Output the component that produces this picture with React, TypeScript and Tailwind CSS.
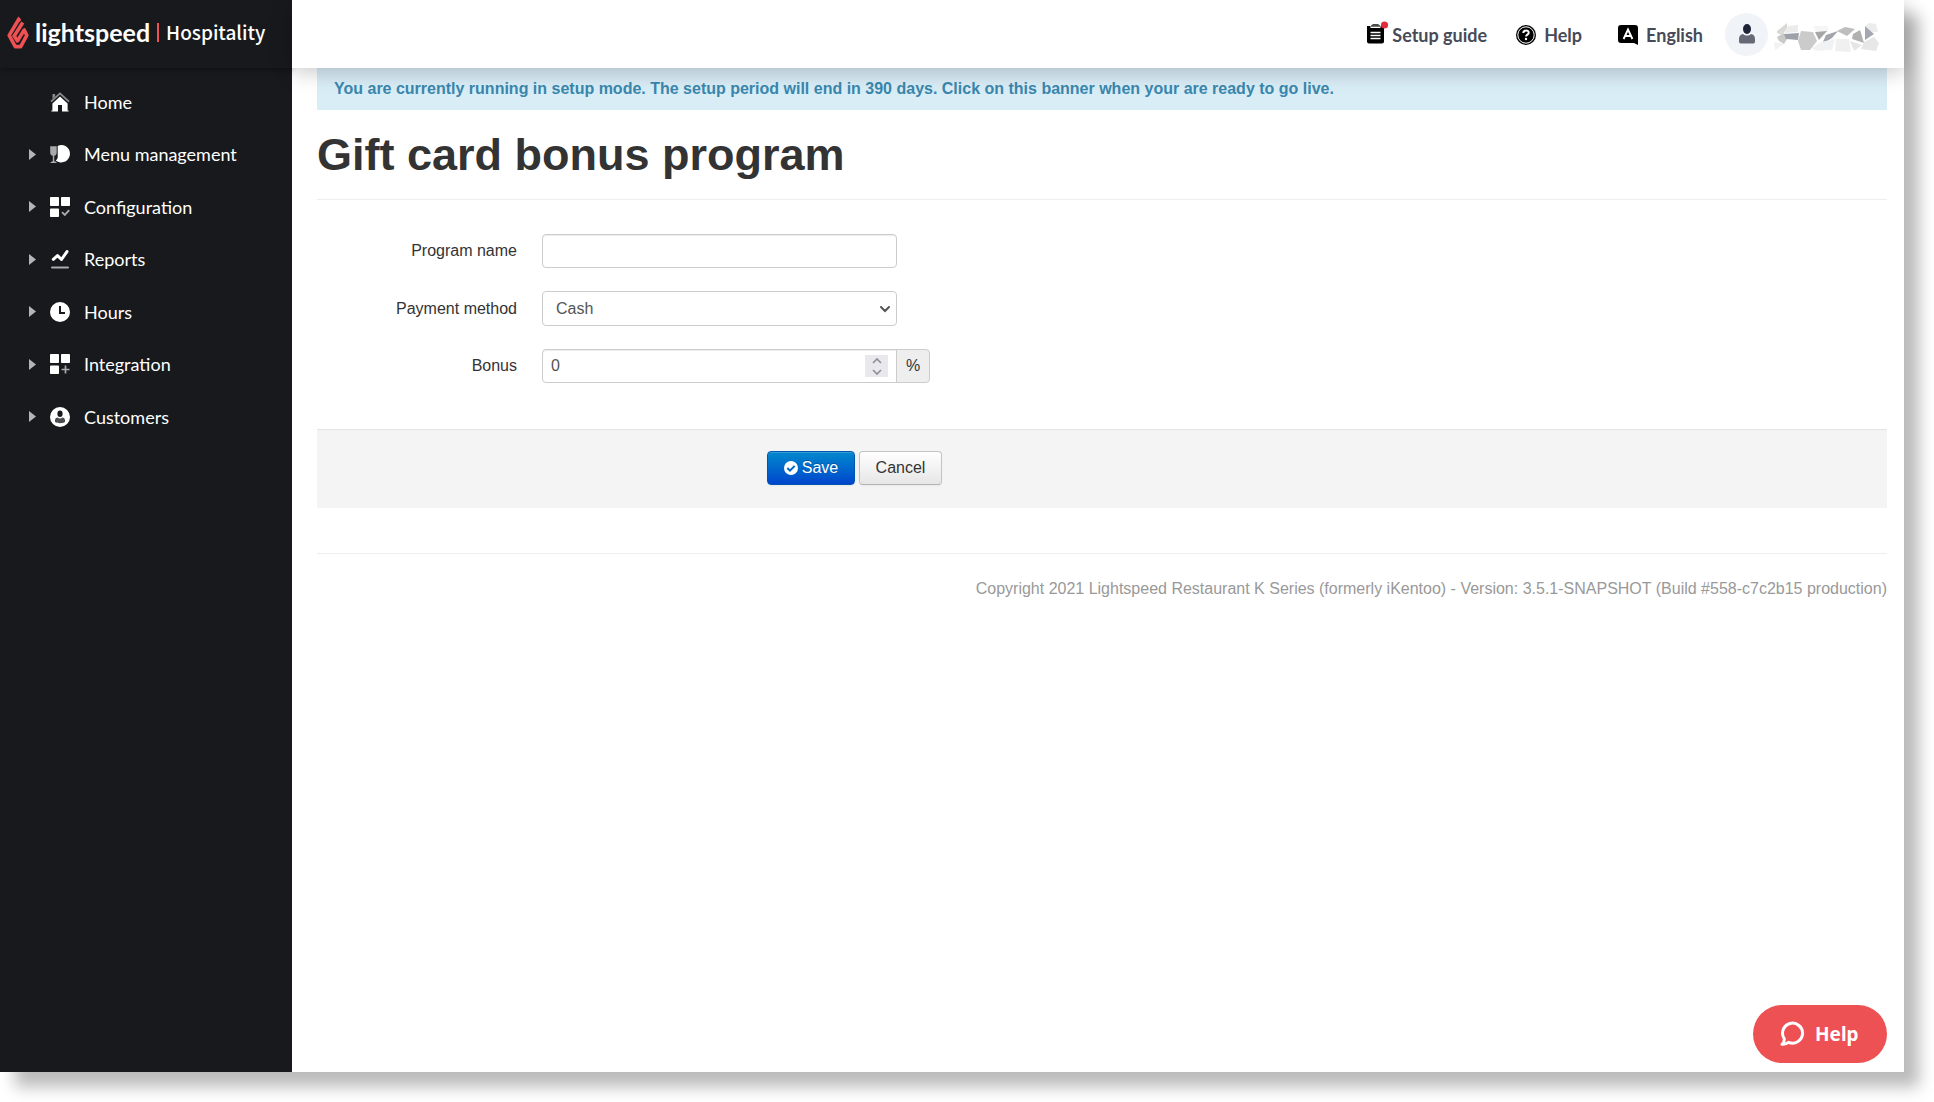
import { type ReactNode, useState } from "react"

function FlameLogo() {
  return (
    <svg viewBox="0 0 22 33" className="mr-[6px] h-[33px] w-[22px]" aria-hidden="true">
      <g fill="none" stroke="#ee5153" strokeWidth="3.6">
        <path d="M12.5 2 2.2 19.3 8.3 30.6h5.4l6.100-11.300-2.600-5.300L10 25.500" strokeLinejoin="round" />
        <path d="M15.8 6.5 7.2 20l4 6" />
      </g>
      <path d="M11.5 0 14 4.5l-2.500 2z" fill="#ee5153" />
    </svg>
  )
}

function HomeIcon() {
  return (
    <svg viewBox="0 0 20 20" className="size-5" aria-hidden="true">
      <path d="M2.5 2h2.6v2.6L2.5 7z" fill="#8b8c8e" />
      <path d="M1 9.6 10 1.4l9 8.2" fill="none" stroke="#8b8c8e" strokeWidth="1.8" />
      <path d="M10 4.6 17.6 11.6V18.4H18.6V19.6H12V13H8V19.6H1.4V18.4H2.4V11.6z" fill="#fff" />
    </svg>
  )
}

function MenuIcon() {
  return (
    <svg viewBox="0 0 20 20" className="size-5" aria-hidden="true">
      <path d="M11.5 1a8.7 8.7 0 1 1-5.8 15.4c2-1.2 2.2-3.2 2-5.4V1.9A8.7 8.7 0 0 1 11.5 1z" fill="#fff" />
      <path d="M.2 2.3h6.5v6.2c0 2-.9 3-2.4 3.3v5.4l2.2.9v1H.6v-1l2.2-.9v-5.4C1.200 11.500.2 10.500.2 8.500z" fill="#a9aaab" />
    </svg>
  )
}

function Tiles({ children }: { children: ReactNode }) {
  return (
    <svg viewBox="0 0 20 20" className="size-5" aria-hidden="true">
      <g fill="#fff">
        <rect width="9" height="9" rx=".8" />
        <rect x="11" width="9" height="9" rx=".8" />
        <rect y="11.5" width="9" height="8.5" rx=".8" />
      </g>
      {children}
    </svg>
  )
}

function ReportsIcon() {
  return (
    <svg viewBox="0 0 20 20" className="size-5" aria-hidden="true">
      <path d="M3.3 10.3 7.5 6.6l4 3.9L17 2.6" fill="none" stroke="#fff" strokeWidth="3" strokeLinecap="round" strokeLinejoin="round" />
      <rect x="1" y="17.4" width="18" height="2.2" rx="1" fill="#a9aaab" />
    </svg>
  )
}

function ClockIcon() {
  return (
    <svg viewBox="0 0 20 20" className="size-5" aria-hidden="true">
      <circle cx="10" cy="10" r="10" fill="#fff" />
      <path d="M10 4v7h5" fill="none" stroke="#18191c" strokeWidth="2" />
    </svg>
  )
}

function CustomerIcon() {
  return (
    <svg viewBox="0 0 20 20" className="size-5" aria-hidden="true">
      <circle cx="10" cy="10" r="10" fill="#fff" />
      <ellipse cx="10" cy="6.8" rx="2.6" ry="3.2" fill="#18191c" />
      <path d="M5 13.5c0-2 1-3 2.7-3 1.3 1.3 3.3 1.3 4.6 0 1.7 0 2.7 1 2.7 3v1.6c-2.5 1.6-7.5 1.6-10 0z" fill="#4c4d50" />
    </svg>
  )
}

const navItems = [
  { label: "Home", icon: <HomeIcon />, nested: false },
  { label: "Menu management", icon: <MenuIcon />, nested: true },
  {
    label: "Configuration",
    icon: (
      <Tiles>
        <path d="m12 15.2 2.8 2.8 4.4-4.8" fill="none" stroke="#a9aaab" strokeWidth="1.9" />
      </Tiles>
    ),
    nested: true,
  },
  { label: "Reports", icon: <ReportsIcon />, nested: true },
  { label: "Hours", icon: <ClockIcon />, nested: true },
  {
    label: "Integration",
    icon: (
      <Tiles>
        <path d="M15.5 11.5v8M11.5 15.5h8" fill="none" stroke="#a9aaab" strokeWidth="1.7" />
      </Tiles>
    ),
    nested: true,
  },
  { label: "Customers", icon: <CustomerIcon />, nested: true },
]

function Sidebar() {
  return (
    <aside className="w-[292px] shrink-0 bg-[#18191c] text-white">
      <a href="#" className="flex h-[68px] items-center pl-[7px] pb-1 shadow-[0_2px_6px_rgba(0,0,0,0.3)]">
        <FlameLogo />
        <span className="font-['Lato',sans-serif] text-[25px] leading-[34px] font-bold">lightspeed</span>
        <span className="mx-[7px] h-[19px] w-[2px] bg-[#ee5153]" />
        <span className="font-['Noto_Sans_CJK_SC',sans-serif] text-[19px] leading-[30px] font-medium">
          Hospitality
        </span>
      </a>
      <nav className="pt-[7px]">
        <ul>
          {navItems.map((item) => (
            <li key={item.label} className="h-[53px] even:h-[52px]">
              <a href="#" className="flex h-full items-center pl-[29px] font-['Lato',sans-serif] text-[18px]">
                <svg viewBox="0 0 7 11" className="mr-[14px] h-[11px] w-[7px]" aria-hidden="true">
                  {item.nested && <path d="M0 0 7 5.5 0 11z" fill="#b4b5b6" />}
                </svg>
                {item.icon}
                <span className="ml-[14px]">{item.label}</span>
              </a>
            </li>
          ))}
        </ul>
      </nav>
    </aside>
  )
}

function RedactedName() {
  return (
    <svg viewBox="0 0 106 30" className="mt-[6px] ml-[6px] h-[30px] w-[106px]" role="img" aria-label="User name">
      <path d="M3 9 13 1v5L8 13l-5-2z" fill="#d9d9d7" />
      <path d="m14 4 10-1v7l-14 1z" fill="#ececec" />
      <path d="m3 15 7-4 3 6-3 5-5-3z" fill="#c9cac6" />
      <path d="M0 20 10 22 1 28z" fill="#f2f2f2" />
      <path d="m10 12 15-1-1 7-12-1z" fill="#9da1a8" />
      <path d="m27 9 12 1 4 9-7 9h-9L24 19z" fill="#cbcbcc" />
      <path d="M40 4h14v6L41 9z" fill="#f5f5f5" />
      <path d="m41 10 12-1-8 9z" fill="#a5a6a8" />
      <path d="m52 13 12-4-6 7-10 6z" fill="#a2a5ab" />
      <path d="m38 26 9-6 14-3-3 11-16 1z" fill="#f1f2f3" />
      <path d="m63 9 8-4 10 2-8 7z" fill="#bebebe" />
      <path d="m62 17 13 0 2 13-16-1z" fill="#f0f0f0" />
      <path d="m79 12 7-4 4 13-12-4z" fill="#b1b1b1" />
      <path d="m91 4 4-3 7 1 2 8-6 0z" fill="#ececef" />
      <path d="m91 4 9 8-9 6z" fill="#a4a8b1" />
      <path d="m76 19 12 4-8 6z" fill="#e5e6e5" />
      <path d="m90 20 10-5 5 6-3 8-15-2z" fill="#e7e7e7" />
    </svg>
  )
}

function TopBar() {
  return (
    <header className="relative z-10 flex h-[68px] shrink-0 items-center justify-end bg-white pr-6 font-['Lato',sans-serif] text-[18px] font-bold text-[#474b57] shadow-[0_4px_20px_rgba(0,0,0,0.22)]">
      <div className="flex items-center pt-[2px]">
        <button type="button" className="flex items-center">
          <svg viewBox="0 0 22 24" className="mr-1 mb-1 h-6 w-[22px]" aria-hidden="true">
            <path d="M1 5h17v15.500a2 2 0 0 1-2 2H3a2 2 0 0 1-2-2z" fill="#000" />
            <path d="M4.5 3h10v4h-10z" fill="#fff" />
            <path d="M5 5.800V4.500L7 3h5l2 1.500v1.300z" fill="#4b4b4b" />
            <path d="M4.500 11.500h10M4.500 14.500h10M4.500 17.500h10" stroke="#fff" strokeWidth="1.3" />
            <circle cx="18.5" cy="4" r="3.6" fill="#e12d39" />
          </svg>
          Setup guide
        </button>
        <button type="button" className="ml-[29px] flex items-center">
          <svg viewBox="0 0 20 20" className="mr-2 size-5" aria-hidden="true">
            <circle cx="10" cy="10" r="10" fill="#000" />
            <circle cx="10" cy="10" r="8.2" fill="none" stroke="#fff" strokeWidth="1" />
            <path d="M7.300 8c.1-3.400 5.500-3.200 5.400-.2 0 1.900-2.600 1.800-2.600 3.700" fill="none" stroke="#fff" strokeWidth="2" />
            <circle cx="10" cy="14" r="1.2" fill="#fff" />
          </svg>
          Help
        </button>
        <button type="button" className="ml-[36px] flex items-center">
          <svg viewBox="0 0 20 20" className="mr-2 size-5" aria-hidden="true">
            <path d="M3 0h14a3 3 0 0 1 3 3v17l-4-2H3a3 3 0 0 1-3-3V3a3 3 0 0 1 3-3z" fill="#000" />
            <path d="M5.600 14 10 4.500l4.400 9.500M7.300 11h5.400" fill="none" stroke="#fff" strokeWidth="1.9" />
          </svg>
          English
        </button>
      </div>
      <button type="button" className="ml-[22px] flex items-center">
        <span className="flex size-[43px] items-center justify-center rounded-full bg-[#f0f3f7]">
          <svg viewBox="0 0 16 20" className="h-5 w-4" aria-hidden="true">
            <ellipse cx="8" cy="5" rx="4" ry="5" fill="#1f2439" />
            <path d="M0 15c0-3 1.500-4.500 4-5 2.300 2 5.700 2 8 0 2.500.5 4 2 4 5v2.500c0 1.500-1 2-2 2H2c-1 0-2-.5-2-2z" fill="#666a76" />
          </svg>
        </span>
        <RedactedName />
      </button>
    </header>
  )
}

function Field({ id, label, children }: { id: string; label: string; children: ReactNode }) {
  return (
    <div className="mb-[23px] flex items-center">
      <label htmlFor={id} className="mr-[25px] w-[200px] text-right text-[#333]">
        {label}
      </label>
      {children}
    </div>
  )
}

function BonusForm() {
  const [bonus, setBonus] = useState(0)
  return (
    <form onSubmit={(e) => e.preventDefault()}>
      <div className="pt-[34px] pb-[23px]">
        <Field id="program-name" label="Program name">
          <input
            id="program-name"
            type="text"
            className="h-[34px] w-[355px] rounded-[4px] border border-[#ccc] px-2 text-[#555] shadow-[inset_0_1px_1px_rgba(0,0,0,0.075)]"
          />
        </Field>
        <Field id="payment-method" label="Payment method">
          <div className="relative">
            <select
              id="payment-method"
              defaultValue="Cash"
              className="block h-[35px] w-[355px] appearance-none rounded-[4px] border border-[#ccc] bg-white px-[13px] text-[#555]"
            >
              <option>Cash</option>
            </select>
            <svg viewBox="0 0 10 7" className="pointer-events-none absolute top-[15px] right-[7px] h-[7px] w-[10px]" aria-hidden="true">
              <path d="m1 1 4 4 4-4" fill="none" stroke="#555" strokeWidth="2" strokeLinecap="round" />
            </svg>
          </div>
        </Field>
        <Field id="bonus" label="Bonus">
          <div className="relative">
            <input
              id="bonus"
              type="number"
              value={bonus}
              onChange={(e) => setBonus(Number(e.target.value))}
              className="block h-[34px] w-[355px] [appearance:textfield] rounded-l-[4px] border border-[#ccc] px-2 text-[#555] shadow-[inset_0_1px_1px_rgba(0,0,0,0.075)]"
            />
            <div className="absolute top-[6px] right-[9px] flex h-[22px] w-[23px] flex-col bg-[#e9e9ed]">
              <button type="button" aria-label="Increase" onClick={() => setBonus((b) => b + 1)} className="flex flex-1 items-center justify-center">
                <svg viewBox="0 0 10 6" className="h-[6px] w-[10px]" aria-hidden="true">
                  <path d="m1 5 4-4 4 4" fill="none" stroke="#8f8f9d" strokeWidth="1.7" />
                </svg>
              </button>
              <button type="button" aria-label="Decrease" onClick={() => setBonus((b) => b - 1)} className="flex flex-1 items-center justify-center">
                <svg viewBox="0 0 10 6" className="h-[6px] w-[10px]" aria-hidden="true">
                  <path d="m1 1 4 4 4-4" fill="none" stroke="#8f8f9d" strokeWidth="1.7" />
                </svg>
              </button>
            </div>
          </div>
          <span className="-ml-px flex h-[34px] w-[34px] items-center justify-center rounded-r-[4px] border border-[#ccc] bg-[#eee] text-[#333]">
            %
          </span>
        </Field>
      </div>
      <div className="flex h-[79px] gap-1 border-t border-[#e5e5e5] bg-[#f4f4f4] pt-[21px] pl-[450px]">
        <button
          type="submit"
          className="flex h-[34px] w-[88px] items-center justify-center gap-1 rounded-[4px] border border-[#0055b3] bg-linear-to-b from-[#0088cc] to-[#0044cc] text-white shadow-[inset_0_1px_0_rgba(255,255,255,0.2),0_1px_2px_rgba(0,0,0,0.05)] [text-shadow:0_-1px_0_rgba(0,0,0,0.25)]"
        >
          <svg viewBox="0 0 14 14" className="size-[14px]" aria-hidden="true">
            <circle cx="7" cy="7" r="7" fill="#fff" />
            <path d="m3.300 7 2.700 2.700 4.700-4.800" fill="none" stroke="#0066cc" strokeWidth="2" />
          </svg>
          Save
        </button>
        <button
          type="button"
          className="h-[34px] w-[83px] rounded-[4px] border border-[#c4c4c4] border-b-[#b3b3b3] bg-linear-to-b from-white to-[#e6e6e6] text-[#333] shadow-[0_1px_2px_rgba(0,0,0,0.05)]"
        >
          Cancel
        </button>
      </div>
    </form>
  )
}

export default function App() {
  return (
    <div className="h-screen bg-white pr-[30px] pb-[30px] font-['Liberation_Sans',Arial,sans-serif] text-[16px] leading-[22px]">
      <div className="relative flex h-full bg-white shadow-[15px_15px_15px_rgba(0,0,0,0.27)]">
        <Sidebar />
        <div className="flex min-w-0 flex-1 flex-col">
          <TopBar />
          <main className="pr-[17px] pl-[25px]">
            <a href="#" className="flex h-[42px] items-center bg-[#d9edf7] px-[17px] font-bold text-[#3a87ad]">
              You are currently running in setup mode. The setup period will end in 390 days. Click on this banner when your are ready to go live.
            </a>
            <h1 className="border-b border-[#eee] pt-[22px] pb-[21px] text-[45px] leading-[46px] font-bold text-[#333]">
              Gift card bonus program
            </h1>
            <BonusForm />
            <footer className="mt-[45px] border-t border-[#eee] pt-6 text-right text-[#999]">
              Copyright 2021 Lightspeed Restaurant K Series (formerly iKentoo) - Version: 3.5.1-SNAPSHOT (Build #558-c7c2b15 production)
            </footer>
          </main>
        </div>
        <button
          type="button"
          className="absolute right-[17px] bottom-[9px] z-20 flex h-[58px] w-[134px] items-center rounded-full bg-[#ee5153] pl-[27px] font-['Noto_Sans',sans-serif] text-[19px] font-bold text-white"
        >
          <svg viewBox="0 0 25 26" className="mr-[10px] h-[26px] w-[25px]" aria-hidden="true">
            <path d="M4.300 17.800A10 10 0 1 1 8.500 21.300C6.800 23 4.500 23.500 2 23.300 3.700 21.800 4.500 20 4.300 17.800z" fill="none" stroke="#fff" strokeWidth="3" strokeLinejoin="round" />
          </svg>
          Help
        </button>
      </div>
    </div>
  )
}
